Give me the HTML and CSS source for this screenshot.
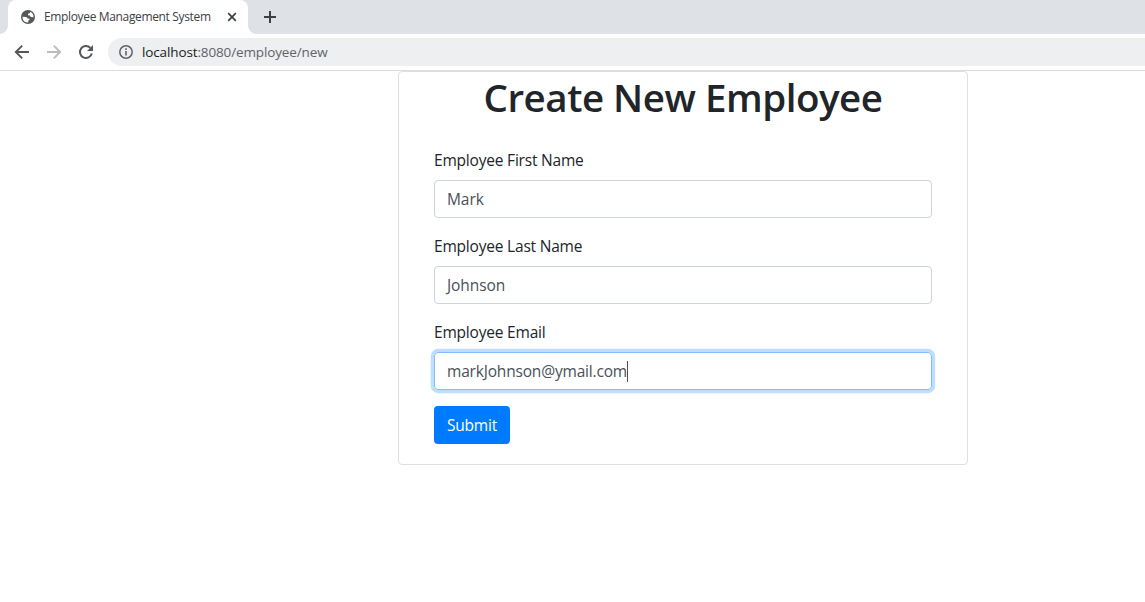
FILE: index.html
```html
<!DOCTYPE html>
<html lang="en">
<head>
<meta charset="utf-8">
<title>Employee Management System</title>
<link rel="stylesheet" href="styles.css">
</head>
<body>
<header class="browser">
  <div class="tabstrip">
    <div class="tab">
      <svg class="globe" width="14" height="14" viewBox="0 0 14 14"><circle cx="7" cy="7" r="7" fill="#54585d"/><path d="M1.5 6.8 L5 6.9 Q6.6 7.2 6.6 8.6 L8.6 8.8 Q9 10.2 7.4 10.4 L7.2 12.5 Q3.3 12.7 1.8 9.2ZM7.2 1.5 L9 1.7 L9.1 2.9 L7 3.8 L7 5.3 L8.8 5.6 L9.8 7 L12.5 7.2 Q12.7 3.7 9.8 2 Q8.5 1.3 7.2 1.5Z" fill="#fff"/></svg>
      <span class="tab-title">Employee Management System</span>
      <svg width="10" height="10" viewBox="0 0 10 10"><path d="M1.2 1.2l7.6 7.6M8.8 1.2L1.2 8.8" stroke="#3c4043" stroke-width="1.7"/></svg>
    </div>
    <svg class="new-tab" width="12" height="12" viewBox="0 0 12 12"><path d="M6 0v12M0 6h12" stroke="#3c4043" stroke-width="2"/></svg>
  </div>
  <div class="toolbar">
    <svg width="16" height="16" viewBox="0 0 16 16" fill="none" stroke="#54585d" stroke-width="1.9"><path d="M15 8H2.2M8.2 1.6L1.8 8l6.4 6.4"/></svg>
    <svg width="16" height="16" viewBox="0 0 16 16" fill="none" stroke="#babcbe" stroke-width="1.9"><path d="M1 8h12.8M7.8 1.6L14.2 8l-6.4 6.4"/></svg>
    <svg width="16" height="16" viewBox="0 0 16 16"><path d="M13.8 9.5A6 6 0 1 1 12.4 3.9" fill="none" stroke="#54585d" stroke-width="2"/><path d="M15 1v6H9z" fill="#54585d"/></svg>
    <div class="address">
      <svg width="14" height="14" viewBox="0 0 14 14"><circle cx="7" cy="7" r="6.2" fill="none" stroke="#5f6368" stroke-width="1.5"/><path d="M7 6v4.5M7 3.3v1.6" stroke="#5f6368" stroke-width="1.6"/></svg>
      <span class="url"><span class="host">localhost</span>:8080/employee/new</span>
    </div>
  </div>
</header>
<main class="card">
  <h1>Create New Employee</h1>
  <form class="card-body">
    <div class="group"><label>Employee First Name</label><div class="control">Mark</div></div>
    <div class="group"><label>Employee Last Name</label><div class="control">Johnson</div></div>
    <div class="group"><label>Employee Email</label><div class="control focused"><span class="email">markJohnson@ymail.com</span><i class="caret"></i></div></div>
    <button type="button" class="submit">Submit</button>
  </form>
</main>
</body>
</html>
```
FILE: styles.css
```css
* { box-sizing: border-box; }
body { margin: 0; height: 602px; overflow: hidden; background: #fff; color: #212529; font-family: "Segoe UI", "Open Sans", "Noto Sans", sans-serif; }
svg { display: block; flex: none; }
.browser { height: 71px; border-bottom: 1px solid #dadce0; }
.tabstrip { display: flex; align-items: center; height: 34px; background: #dee1e6; }
.tab { position: relative; display: flex; align-items: center; width: 240px; height: 34px; margin-left: 8px; padding-left: 13px; background: #fff; border-radius: 8px 8px 0 0; }
.tab::before, .tab::after { content: ""; position: absolute; bottom: 0; width: 8px; height: 8px; }
.tab::before { left: -8px; background: radial-gradient(circle at 0 0, transparent 7.5px, #fff 8px); }
.tab::after { right: -8px; background: radial-gradient(circle at 100% 0, transparent 7.5px, #fff 8px); }
.tab-title { width: 183px; margin-left: 9px; font-size: 12px; line-height: 16px; color: #3c4043; white-space: nowrap; letter-spacing: -0.35px; }
.new-tab { margin-left: 16px; }
.toolbar { display: flex; align-items: center; gap: 16px; height: 36px; padding-left: 14px; }
.address { display: flex; align-items: center; flex: 1; height: 28px; margin-left: -2px; padding-left: 11px; background: #edeff1; border-radius: 14px 0 0 14px; }
.url { margin-left: 9px; font-size: 13.5px; line-height: 20px; color: #5f6368; white-space: nowrap; letter-spacing: -0.13px; }
.host { color: #202124; }
.card { width: 570px; height: 394px; margin-left: 398px; border: 1px solid #dfdfdf; border-radius: 4px; }
h1 { margin: 0; padding-top: 1px; height: 56px; font-size: 38.5px; line-height: 48px; font-weight: 550; letter-spacing: -0.48px; text-align: center; white-space: nowrap; }
.card-body { padding: 20px 35px; }
.group { margin-bottom: 16px; }
label { display: block; height: 24px; margin-bottom: 8px; font-size: 15.5px; line-height: 24px; letter-spacing: -0.2px; }
.control { display: flex; align-items: center; height: 38px; padding: 0 12px; border: 1px solid #ced4da; border-radius: 4px; font-size: 15.5px; line-height: 24px; letter-spacing: -0.08px; color: #495057; }
.focused { border-color: #80bdff; box-shadow: 0 0 0 3.2px #bfdeff; }
.email { width: 180px; white-space: nowrap; letter-spacing: -0.18px; }
.caret { width: 1px; height: 21px; background: #495057; }
.submit { display: block; width: 76px; height: 38px; padding: 0; border: 0; border-radius: 4px; background: #007bff; color: #fff; font: 15.5px/24px "Segoe UI", "Open Sans", "Noto Sans", sans-serif; letter-spacing: -0.2px; }
```
